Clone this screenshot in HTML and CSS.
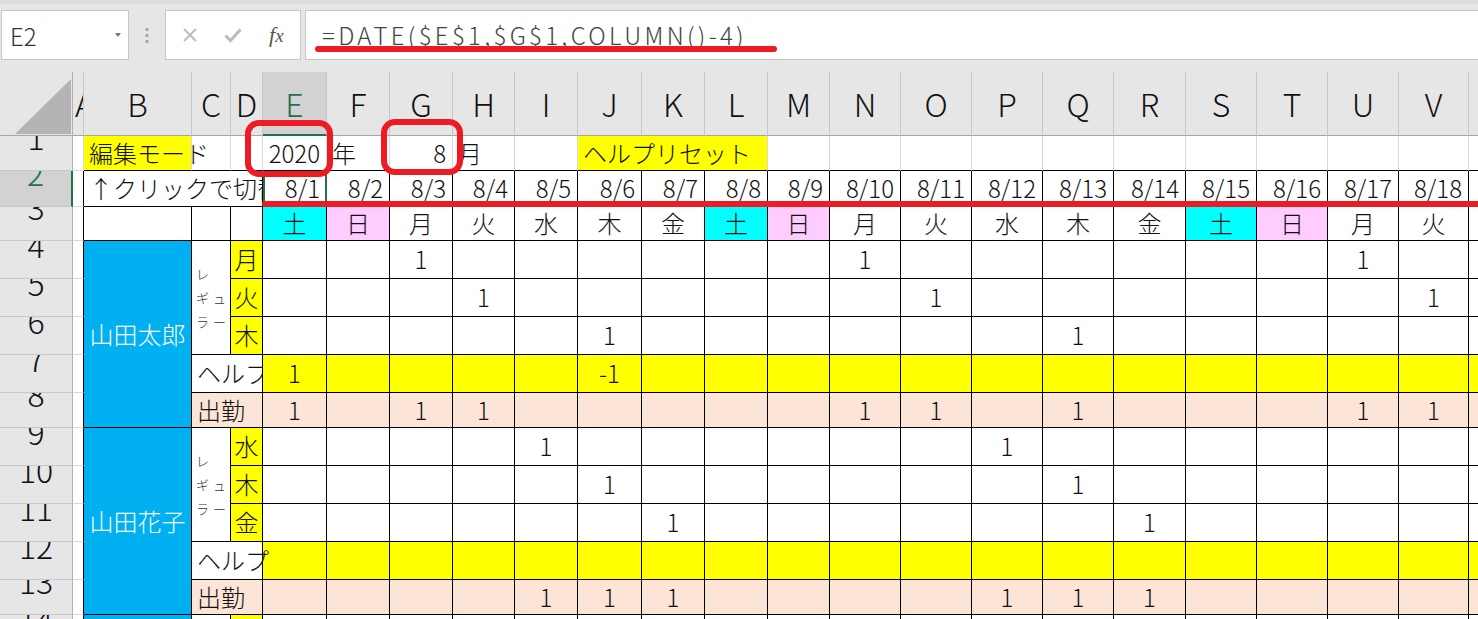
FILE: index.html
```html
<!DOCTYPE html>
<html lang="ja">
<head>
  <meta charset="UTF-8" />
  <meta name="viewport" content="width=device-width, initial-scale=1.0" />
  <title>シフト表</title>
  <link rel="stylesheet" href="styles.css">
</head>
<body>
  <div class="toolbar">
    <div class="namebox">E2<span class="drop"></span></div>
    <div class="dots">
      <svg width="4" height="15" viewBox="0 0 4 15"><rect x="0.5" y="0" width="3" height="3"/><rect x="0.5" y="6" width="3" height="3"/><rect x="0.5" y="12" width="3" height="3"/></svg>
    </div>
    <div class="fbox">
      <svg width="16" height="16" viewBox="0 0 16 16"><path d="M2 2 L14 14 M14 2 L2 14" stroke="#bdbdbd" stroke-width="2" fill="none"/></svg>
      <svg width="18" height="16" viewBox="0 0 18 16"><path d="M1.5 8.5 L6.5 13.5 L16.5 2.5" stroke="#bdbdbd" stroke-width="3" fill="none"/></svg>
      <span class="fx">f<i>x</i></span>
    </div>
    <div class="formula">=DATE($E$1,$G$1,COLUMN()-4)<span class="underline"></span></div>
  </div>

  <div class="sheet">
    <!-- column headers -->
    <div class="ch corner"><svg width="58" height="60" viewBox="0 0 58 60"><polygon points="1,59 57,59 57,4" fill="#b4b4b4"/></svg></div>
    <div class="ch cola">A</div>
    <div class="ch">B</div><div class="ch">C</div><div class="ch">D</div>
    <div class="ch on">E</div><div class="ch">F</div><div class="ch">G</div><div class="ch">H</div>
    <div class="ch">I</div><div class="ch">J</div><div class="ch">K</div><div class="ch">L</div>
    <div class="ch">M</div><div class="ch">N</div><div class="ch">O</div><div class="ch">P</div>
    <div class="ch">Q</div><div class="ch">R</div><div class="ch">S</div><div class="ch">T</div>
    <div class="ch">U</div><div class="ch">V</div><div class="ch">W</div>

    <!-- row 1 -->
    <div class="rh"><span>1</span></div>
    <div class="a1"></div>
    <div class="g y l over">編集モード</div>
    <div class="g"></div><div class="g"></div>
    <div class="g r">2020</div>
    <div class="g l">年</div>
    <div class="g r">8</div>
    <div class="g l">月</div>
    <div class="g"></div>
    <div class="g y l span3">ヘルプリセット</div>
    <div class="g"></div><div class="g"></div><div class="g"></div><div class="g"></div>
    <div class="g"></div><div class="g"></div><div class="g"></div><div class="g"></div>
    <div class="g"></div><div class="g"></div><div class="g"></div>

    <!-- row 2 -->
    <div class="rh on"><span>2</span></div>
    <div class="a"></div>
    <div class="l span3">↑クリックで切替</div>
    <div class="r cur">8/1</div><div class="r">8/2</div><div class="r">8/3</div><div class="r">8/4</div>
    <div class="r">8/5</div><div class="r">8/6</div><div class="r">8/7</div><div class="r">8/8</div>
    <div class="r">8/9</div><div class="r">8/10</div><div class="r">8/11</div><div class="r">8/12</div>
    <div class="r">8/13</div><div class="r">8/14</div><div class="r">8/15</div><div class="r">8/16</div>
    <div class="r">8/17</div><div class="r">8/18</div><div class="r">8/19</div>

    <!-- row 3 -->
    <div class="rh"><span>3</span></div>
    <div class="a"></div>
    <div></div><div></div><div></div>
    <div class="cy">土</div><div class="pk">日</div><div>月</div><div>火</div><div>水</div><div>木</div><div>金</div>
    <div class="cy">土</div><div class="pk">日</div><div>月</div><div>火</div><div>水</div><div>木</div><div>金</div>
    <div class="cy">土</div><div class="pk">日</div><div>月</div><div>火</div><div>水</div>

    <!-- 山田太郎 -->
    <div class="rh"><span>4</span></div>
    <div class="a"></div>
    <div class="bl name">山田太郎</div>
    <div class="reg"><span>レ<br>ギュ<br>ラー</span></div>
    <div class="y">月</div>
    <div></div><div></div><div>1</div><div></div><div></div><div></div><div></div><div></div><div></div>
    <div>1</div><div></div><div></div><div></div><div></div><div></div><div></div><div>1</div><div></div><div></div>

    <div class="rh"><span>5</span></div>
    <div class="a"></div>
    <div class="y">火</div>
    <div></div><div></div><div></div><div>1</div><div></div><div></div><div></div><div></div><div></div>
    <div></div><div>1</div><div></div><div></div><div></div><div></div><div></div><div></div><div>1</div><div></div>

    <div class="rh"><span>6</span></div>
    <div class="a"></div>
    <div class="y">木</div>
    <div></div><div></div><div></div><div></div><div></div><div>1</div><div></div><div></div><div></div>
    <div></div><div></div><div></div><div>1</div><div></div><div></div><div></div><div></div><div></div><div></div>

    <div class="rh"><span>7</span></div>
    <div class="a"></div>
    <div class="l span2">ヘルプ</div>
    <div class="y">1</div><div class="y"></div><div class="y"></div><div class="y"></div><div class="y"></div>
    <div class="y">-1</div><div class="y"></div><div class="y"></div><div class="y"></div><div class="y"></div>
    <div class="y"></div><div class="y"></div><div class="y"></div><div class="y"></div><div class="y"></div>
    <div class="y"></div><div class="y"></div><div class="y"></div><div class="y"></div>

    <div class="rh"><span>8</span></div>
    <div class="a"></div>
    <div class="pe l span2">出勤</div>
    <div class="pe">1</div><div class="pe"></div><div class="pe">1</div><div class="pe">1</div><div class="pe"></div>
    <div class="pe"></div><div class="pe"></div><div class="pe"></div><div class="pe"></div><div class="pe">1</div>
    <div class="pe">1</div><div class="pe"></div><div class="pe">1</div><div class="pe"></div><div class="pe"></div>
    <div class="pe"></div><div class="pe">1</div><div class="pe">1</div><div class="pe"></div>

    <!-- 山田花子 -->
    <div class="rh"><span>9</span></div>
    <div class="a"></div>
    <div class="bl name">山田花子</div>
    <div class="reg"><span>レ<br>ギュ<br>ラー</span></div>
    <div class="y">水</div>
    <div></div><div></div><div></div><div></div><div>1</div><div></div><div></div><div></div><div></div>
    <div></div><div></div><div>1</div><div></div><div></div><div></div><div></div><div></div><div></div><div></div>

    <div class="rh"><span>10</span></div>
    <div class="a"></div>
    <div class="y">木</div>
    <div></div><div></div><div></div><div></div><div></div><div>1</div><div></div><div></div><div></div>
    <div></div><div></div><div></div><div>1</div><div></div><div></div><div></div><div></div><div></div><div></div>

    <div class="rh"><span>11</span></div>
    <div class="a"></div>
    <div class="y">金</div>
    <div></div><div></div><div></div><div></div><div></div><div></div><div>1</div><div></div><div></div>
    <div></div><div></div><div></div><div></div><div>1</div><div></div><div></div><div></div><div></div><div></div>

    <div class="rh"><span>12</span></div>
    <div class="a"></div>
    <div class="l span2 over">ヘルプ</div>
    <div class="y"></div><div class="y"></div><div class="y"></div><div class="y"></div><div class="y"></div>
    <div class="y"></div><div class="y"></div><div class="y"></div><div class="y"></div><div class="y"></div>
    <div class="y"></div><div class="y"></div><div class="y"></div><div class="y"></div><div class="y"></div>
    <div class="y"></div><div class="y"></div><div class="y"></div><div class="y"></div>

    <div class="rh"><span>13</span></div>
    <div class="a"></div>
    <div class="pe l span2">出勤</div>
    <div class="pe"></div><div class="pe"></div><div class="pe"></div><div class="pe"></div><div class="pe">1</div>
    <div class="pe">1</div><div class="pe">1</div><div class="pe"></div><div class="pe"></div><div class="pe"></div>
    <div class="pe"></div><div class="pe">1</div><div class="pe">1</div><div class="pe">1</div><div class="pe"></div>
    <div class="pe"></div><div class="pe"></div><div class="pe"></div><div class="pe"></div>

    <div class="rh"><span>14</span></div>
    <div class="a"></div>
    <div class="bl"></div>
    <div></div>
    <div class="y">月</div>
    <div></div><div></div><div></div><div></div><div></div><div></div><div></div><div></div><div></div>
    <div></div><div></div><div></div><div></div><div></div><div></div><div></div><div></div><div></div><div></div>
  </div>

  <div class="mark mark-year"></div>
  <div class="mark mark-month"></div>
  <div class="strike"></div>
</body>
</html>
```

FILE: styles.css
```css
* {
  box-sizing: border-box;
}
body {
  margin: 0;
  width: 1478px;
  height: 619px;
  overflow: hidden;
  position: relative;
  background: #fff;
  color: #111;
  font-family: "Noto Sans CJK JP", "Noto Sans", sans-serif;
  font-weight: 300;
}

/* formula bar */
.toolbar {
  display: flex;
  height: 72px;
  padding-top: 6px;
  border-top: 4px solid #dcdcdc;
  background: #e6e6e6;
}
.namebox {
  display: flex;
  align-items: center;
  width: 128px;
  height: 50px;
  margin-left: 1px;
  padding-left: 8px;
  background: #fff;
  border: 1px solid #c6c6c6;
  font-size: 24px;
  color: #333;
}
.drop {
  margin-left: auto;
  margin-right: 7px;
  border-left: 3px solid transparent;
  border-right: 3px solid transparent;
  border-top: 4px solid #777;
}
.dots {
  display: flex;
  align-items: center;
  justify-content: center;
  width: 36px;
  height: 50px;
  fill: #a8a8a8;
}
.fbox {
  display: grid;
  grid-template-columns: repeat(3, 1fr);
  place-items: center;
  width: 136px;
  height: 50px;
  padding: 0 2px;
  background: #fff;
  border: 1px solid #c6c6c6;
}
.fx {
  font-family: "Liberation Serif", serif;
  font-style: italic;
  font-size: 22px;
  color: #555;
}
.fx i {
  font-size: 19px;
}
.formula {
  position: relative;
  display: flex;
  align-items: center;
  flex: 1;
  height: 50px;
  margin-left: 4px;
  padding-left: 16px;
  padding-bottom: 2px;
  background: #fff;
  border: 1px solid #c6c6c6;
  border-right: none;
  font-size: 24px;
  letter-spacing: 3.3px;
  color: #444;
}
.underline {
  position: absolute;
  left: 9px;
  top: 35px;
  width: 462px;
  height: 6px;
  border-radius: 3px;
  background: #ed1c24;
}

/* sheet */
.sheet {
  display: grid;
  grid-template-columns: 73px 11px 108px 39px 32px 64px 63px 63px 62px 63px 64px 63px 63px 62px 71px 71px 71px 71px 72px 71px 71px 71px 70px 71px;
  grid-template-rows: 64px 35px 36px 34px 38px 38px 38px 38px 35px 38px 38px 38px 38px 35px 38px;
  font-size: 24px;
  line-height: 1.2;
}
.sheet > div {
  display: flex;
  align-items: center;
  justify-content: center;
  min-width: 0;
  overflow: hidden;
  white-space: nowrap;
  border-right: 1px solid #000;
  border-bottom: 1px solid #000;
}
.sheet > .ch {
  background: #e6e6e6;
  border-right-color: #c6c6c6;
  border-bottom-color: #a6a6a6;
  font-size: 32px;
  color: #111;
}
.sheet > .ch.on {
  background: #d2d2d2;
  color: #217346;
  border-bottom: 2px solid #217346;
}
.sheet > .corner {
  align-items: flex-end;
  justify-content: flex-end;
  border-right-color: #b0b0b0;
}
.sheet > .cola {
  justify-content: flex-start;
  padding-left: 2px;
}
.sheet > .rh {
  align-items: flex-end;
  background: #e6e6e6;
  border-right-color: #b0b0b0;
  border-bottom-color: #c8c8c8;
  font-size: 32px;
  line-height: 1;
}
.rh span {
  margin-bottom: 18px;
}
.sheet > .rh.on {
  background: #d2d2d2;
  color: #217346;
  border-right: 2px solid #217346;
}
.sheet > .a1 {
  border-right-color: #d9d9d9;
  border-bottom-color: #d9d9d9;
}
.sheet > .a {
  border-bottom-color: #d9d9d9;
}
.sheet > .g {
  border-right-color: #d9d9d9;
}
.sheet > .l {
  justify-content: flex-start;
  padding-left: 5px;
}
.sheet > .r {
  justify-content: flex-end;
  padding-right: 6px;
}
.sheet > .over {
  overflow: visible;
  z-index: 1;
}
.span2 {
  grid-column: span 2;
}
.span3 {
  grid-column: span 3;
}
.sheet > .cur {
  outline: 2px solid #217346;
  outline-offset: -2px;
}
.y {
  background: #ffff00;
}
.cy {
  background: #00ffff;
}
.pk {
  background: #ffccff;
}
.pe {
  background: #fce4d6;
}
.bl {
  background: #00b0f0;
  color: #fff;
}
.name {
  grid-row: span 5;
}
.sheet > .reg {
  grid-row: span 3;
  justify-content: flex-start;
  padding-left: 4px;
  font-size: 13px;
  line-height: 24px;
  letter-spacing: 4px;
  color: #333;
}

/* red annotations */
.mark {
  position: absolute;
  border: 6px solid #ed1c24;
  border-radius: 14px;
}
.mark-year {
  left: 245px;
  top: 120px;
  width: 88px;
  height: 57px;
}
.mark-month {
  left: 381px;
  top: 119px;
  width: 82px;
  height: 56px;
}
.strike {
  position: absolute;
  left: 262px;
  top: 201px;
  width: 1230px;
  height: 6px;
  border-radius: 3px;
  background: #ed1c24;
}
```
